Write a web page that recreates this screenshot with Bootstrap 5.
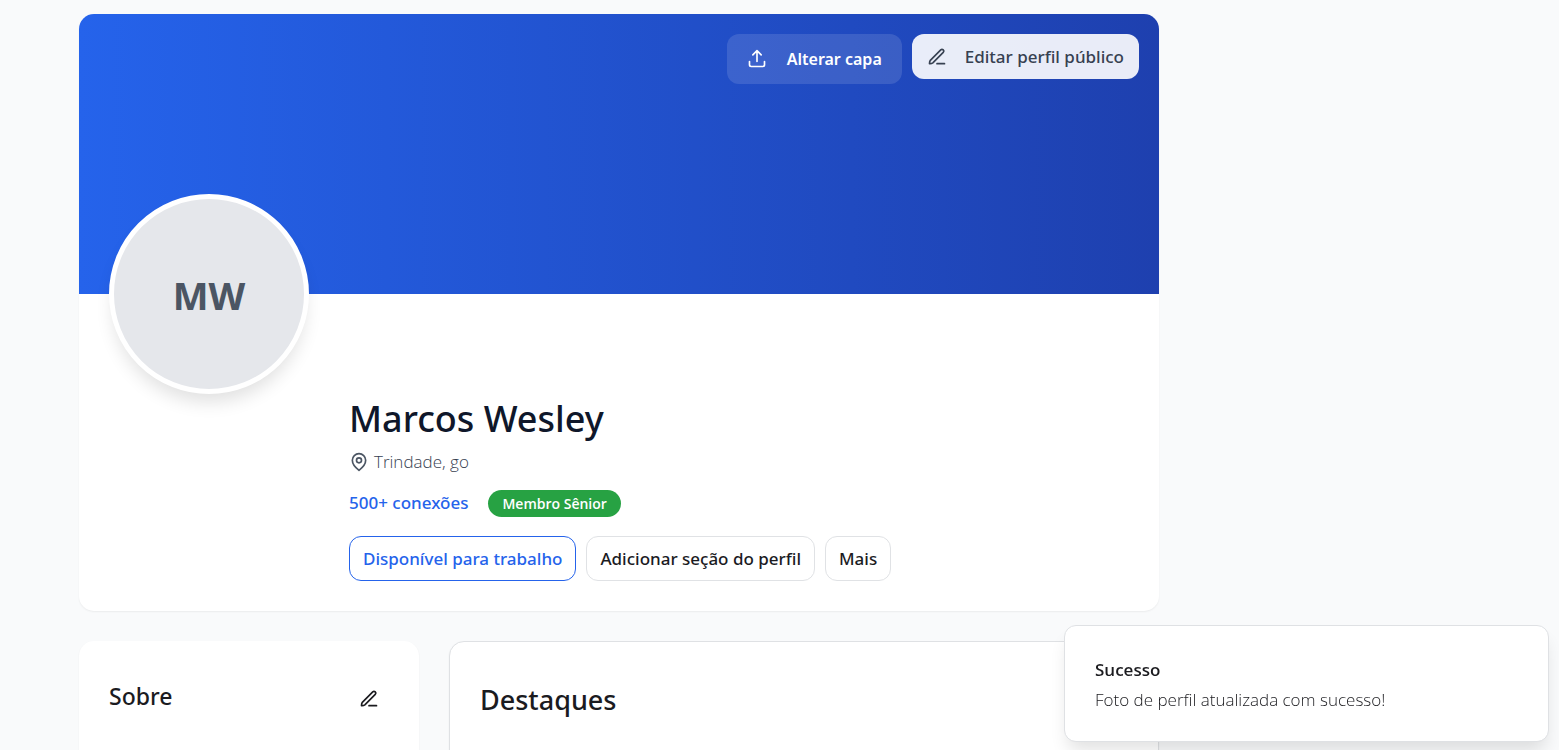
<!DOCTYPE html>
<html lang="pt-BR">
<head>
<meta charset="utf-8">
<meta name="viewport" content="width=device-width, initial-scale=1">
<title>Marcos Wesley | Perfil</title>
<link href="https://cdn.jsdelivr.net/npm/bootstrap@5.3.0/dist/css/bootstrap.min.css" rel="stylesheet">
<style>
  body { font-family: "Open Sans", "Noto Sans", sans-serif; font-size: 17px; line-height: 30px; color: #1b1b1f; background: #f9fafb; }
  .page { max-width: 1401px; padding-top: 14px; }
  .page-grid { display: grid; grid-template-columns: minmax(0, 1fr) 300px; gap: 21px; }
  .sections { display: grid; grid-template-columns: 340px minmax(0, 1fr); gap: 30px; margin-top: 30px; }
  .panel { background: #fff; border-radius: 15px; box-shadow: 0 1px 2px rgba(0, 0, 0, .06); }
  .panel-lined { border: 1px solid #dfe1e4; }
  .section-panel { min-height: 240px; padding: 30px; }
  .cover { height: 280px; padding: 20px; gap: 10px; border-radius: 15px 15px 0 0; background: linear-gradient(to right, #2563eb, #1e40af); }
  .avatar { top: 180px; left: 30px; width: 200px; height: 200px; padding-top: 2px; border: 5px solid #fff; background: #e5e7eb; color: #4b5563; font-size: 38px; font-weight: 700; box-shadow: 0 12px 18px -4px rgba(0, 0, 0, .12); }
  .details { padding: 100px 30px 30px 270px; }
  .person-name, .stats a, .btn, .panel-title, .highlights-title { font-family: "Noto Sans", "Open Sans", sans-serif; }
  .person-name { font-size: 36px; line-height: 50px; font-weight: 500; color: #0f172a; margin: 0 0 4px; }
  .place { color: #374151; font-weight: 300; gap: 5px; line-height: 28px; }
  .place svg { color: #4b5563; }
  .stats { gap: 20px; margin: 12px 0 18px; }
  .stats a { color: #2563eb; font-weight: 500; text-decoration: none; }
  .tier { font-size: 14px; font-weight: 600; line-height: 17px; padding: 5px 14px; background: #27a243; }
  .actions { gap: 10px; }
  .btn { --bs-btn-font-size: 17px; --bs-btn-line-height: 25px; --bs-btn-font-weight: 500; --bs-btn-padding-x: 13px; --bs-btn-padding-y: 9px; --bs-btn-border-radius: 12px; --bs-btn-color: #1b1b1f; --bs-btn-border-color: #e0e2e5; }
  .btn-open { --bs-btn-color: #2563eb; --bs-btn-border-color: #2563eb; }
  .btn-cover { --bs-btn-color: #fff; --bs-btn-font-size: 16px; --bs-btn-font-weight: 600; --bs-btn-line-height: 26px; --bs-btn-padding-x: 20px; --bs-btn-padding-y: 12px; --bs-btn-border-width: 0; background: rgba(255, 255, 255, .12); gap: 20px; }
  .btn-edit { --bs-btn-color: #374151; --bs-btn-border-width: 0; --bs-btn-padding-x: 15px; --bs-btn-padding-y: 10px; background: rgba(255, 255, 255, .9); gap: 18px; }
  .btn-icon { --bs-btn-padding-x: 10px; --bs-btn-padding-y: 18px; --bs-btn-border-width: 0; }
  .panel-title { font-size: 23px; line-height: 40px; font-weight: 500; margin: 5px 0 0; }
  .highlights-title { font-size: 27px; line-height: 40px; font-weight: 500; margin: 8px 0 0; }
  .toast-place { padding: 0 10px 8px; }
  .toast { --bs-toast-max-width: 485px; --bs-toast-font-size: 17px; --bs-toast-bg: #fff; --bs-toast-border-color: #dfe1e4; --bs-toast-border-radius: 12px; --bs-toast-box-shadow: 0 12px 18px -4px rgba(0, 0, 0, .12); --bs-toast-color: #1b1b1f; padding: 29px 30px 26px; font-weight: 300; }
  .toast-title { font-size: 17px; line-height: 30px; font-weight: 600; color: #1b1b1f; margin: 0; }
  svg { fill: none; stroke: currentColor; stroke-width: 2; stroke-linecap: round; stroke-linejoin: round; flex: none; }
</style>
</head>
<body>
<main class="page mx-auto">
  <div class="page-grid">
    <div>
      <section class="panel position-relative">
        <div class="cover d-flex justify-content-end align-items-start">
          <button type="button" class="btn btn-cover d-flex align-items-center">
            <svg width="20" height="20" viewBox="0 0 24 24" aria-hidden="true"><path d="M3 15v4a2 2 0 0 0 2 2h14a2 2 0 0 0 2-2v-4M17 7l-5-5-5 5M12 2v13"/></svg>
            Alterar capa
          </button>
          <button type="button" class="btn btn-edit d-flex align-items-center">
            <svg width="20" height="20" viewBox="0 0 24 24" aria-hidden="true"><path d="M12 20h9M16.5 3.5a2.12 2.12 0 0 1 3 3L7 19q-1.500 1.200-4 1 0-2.500 1-4Z"/></svg>
            Editar perfil público
          </button>
        </div>
        <div class="avatar position-absolute rounded-circle d-flex align-items-center justify-content-center">MW</div>
        <div class="details">
          <h1 class="person-name">Marcos Wesley</h1>
          <div class="place d-flex align-items-center">
            <svg width="20" height="20" viewBox="0 0 24 24" aria-hidden="true"><path d="M20 10c0 6-8 12-8 12s-8-6-8-12a8 8 0 0 1 16 0Z"/><circle cx="12" cy="10" r="3"/></svg>
            Trindade, go
          </div>
          <div class="stats d-flex align-items-center">
            <a href="#conexoes">500+ conexões</a>
            <span class="tier badge rounded-pill">Membro Sênior</span>
          </div>
          <div class="d-flex flex-wrap actions">
            <button type="button" class="btn btn-open">Disponível para trabalho</button>
            <button type="button" class="btn">Adicionar seção do perfil</button>
            <button type="button" class="btn">Mais</button>
          </div>
        </div>
      </section>
      <div class="sections">
        <section class="panel section-panel">
          <div class="d-flex justify-content-between">
            <h2 class="panel-title">Sobre</h2>
            <button type="button" class="btn btn-icon d-flex align-items-center" aria-label="Editar sobre">
              <svg width="20" height="20" viewBox="0 0 24 24" aria-hidden="true"><path d="M12 20h9M16.5 3.5a2.12 2.12 0 0 1 3 3L7 19q-1.500 1.200-4 1 0-2.500 1-4Z"/></svg>
            </button>
          </div>
        </section>
        <section class="panel panel-lined section-panel">
          <h2 class="highlights-title">Destaques</h2>
        </section>
      </div>
    </div>
  </div>
</main>
<div class="toast-place position-fixed bottom-0 end-0">
  <div class="toast show" role="status">
    <h3 class="toast-title">Sucesso</h3>
    <div>Foto de perfil atualizada com sucesso!</div>
  </div>
</div>
<script src="https://cdn.jsdelivr.net/npm/bootstrap@5.3.0/dist/js/bootstrap.bundle.min.js"></script>
</body>
</html>
